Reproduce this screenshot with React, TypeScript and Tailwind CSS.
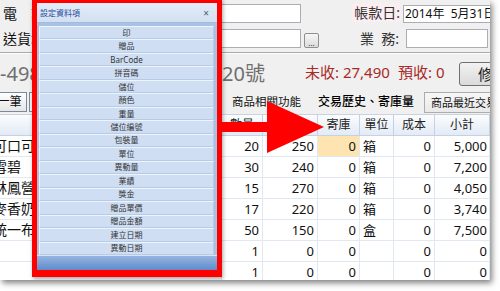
import React from "react";

const font = "font-['Noto_Sans','Noto_Sans_CJK_TC',sans-serif]";

const fields = [
  "印",
  "贈品",
  "BarCode",
  "拼音碼",
  "儲位",
  "顏色",
  "重量",
  "儲位編號",
  "包裝量",
  "單位",
  "異動量",
  "業績",
  "獎金",
  "贈品單價",
  "贈品金額",
  "建立日期",
  "異動日期",
];

const rows = [
  { name: "可口可樂", qty: "20", price: "250", stock: "0", unit: "箱", cost: "0", sum: "5,000" },
  { name: "雪碧", qty: "30", price: "240", stock: "0", unit: "箱", cost: "0", sum: "7,200" },
  { name: "林鳳營鮮乳", qty: "15", price: "270", stock: "0", unit: "箱", cost: "0", sum: "4,050" },
  { name: "麥香奶茶", qty: "17", price: "220", stock: "0", unit: "箱", cost: "0", sum: "3,740" },
  { name: "統一布丁", qty: "50", price: "150", stock: "0", unit: "盒", cost: "0", sum: "7,500" },
  { name: "", qty: "1", price: "0", stock: "0", unit: "", cost: "0", sum: "0" },
  { name: "", qty: "1", price: "0", stock: "0", unit: "", cost: "0", sum: "0" },
];

const cols = "grid grid-cols-[222px_41px_55px_42px_34px_41px_55px]";

function TopForm() {
  return (
    <div className="h-[53px] pt-[4px] flex flex-col gap-[6px] border-b border-[#a9a9a9]">
      {/* 電話 / 帳款日 */}
      <div className="flex items-center h-[19px]">
        <span className="w-[40px] shrink-0 pl-[3px] text-[14px] leading-none whitespace-nowrap overflow-hidden">電　話:</span>
        <div className="w-[261px] shrink-0 h-[19px] bg-white border border-[#abadb3]" />
        <div className="ml-[51px] -mt-[2px] w-[48px] shrink-0 h-[19px] bg-[#fcedf0] flex items-center justify-end text-[14px] text-[#333] leading-none">
          帳款日:
        </div>
        <div className="ml-[3px] mt-[1px] w-[90px] shrink-0 h-[18px] bg-white border border-[#abadb3] flex items-center pl-[1px] text-[12px] leading-none whitespace-nowrap overflow-hidden">
          2014年&nbsp;&nbsp;5月31日
        </div>
      </div>
      {/* 送貨 / 業務 */}
      <div className="flex items-center h-[19px]">
        <span className="w-[40px] shrink-0 pl-[3px] text-[14px] leading-none whitespace-nowrap overflow-hidden">送貨地址:</span>
        <div className="w-[261px] shrink-0 h-[19px] bg-white border border-[#abadb3]" />
        <div className="ml-[3px] mt-[3px] w-[15px] shrink-0 h-[15px] border border-[#8e8f8f] rounded-[2px] bg-gradient-to-b from-[#f6f6f6] to-[#dcdcdc] flex items-end justify-center text-[8px] leading-[9px] text-[#333]">
          ...
        </div>
        <div className="ml-[34px] w-[46px] shrink-0 flex justify-end text-[14px] text-[#333] leading-none whitespace-nowrap">
          業&nbsp;&nbsp;務:
        </div>
        <div className="ml-[7px] w-[82px] shrink-0 h-[19px] bg-white border border-[#abadb3]" />
        <div className="ml-[2px] w-[10px] shrink-0 h-[19px] bg-[#f4f4f4] border border-[#8e8f8f] rounded-[2px]" />
      </div>
    </div>
  );
}

function SummaryRow() {
  return (
    <div className="h-[37px] border-t border-white flex items-center whitespace-nowrap">
      <div className="w-[222px] shrink-0 text-[20px] text-[#6f6f6f] leading-none pt-[3px]">-4987</div>
      <div className="w-[83px] shrink-0 text-[20px] text-[#6f6f6f] leading-none pt-[3px]">20號</div>
      <div className="w-[93px] shrink-0 text-[15px] text-[#a82a27] leading-none">未收: 27,490</div>
      <div className="w-[61px] shrink-0 text-[15px] text-[#a82a27] leading-none">預收: 0</div>
      <div className="mt-[4px] w-[68px] h-[24px] shrink-0 border border-[#707070] rounded-[3px] bg-gradient-to-b from-[#f2f2f2] to-[#dadada] flex items-center justify-center text-[15px] text-[#222]">
        修改
      </div>
    </div>
  );
}

function TabRow() {
  return (
    <div className="h-[25px] flex items-center whitespace-nowrap border-b border-[#c9d3e0]">
      <div className="-ml-[20px] w-[47px] shrink-0 h-[20px] border border-[#7a8a9e] bg-gradient-to-b from-[#ffffff] to-[#e6e6e6] flex items-center justify-center text-[12px] leading-none">
        下一筆
      </div>
      <div className="ml-[2px] w-[40px] shrink-0 h-[20px] border border-[#7a8a9e] bg-[#f4f4f4]" />
      <div className="ml-[163px] shrink-0 text-[11.5px] leading-none text-[#111]">商品相關功能</div>
      <div className="ml-[17px] shrink-0 text-[12px] leading-none text-[#000] font-medium">交易歷史、寄庫量</div>
      <div className="ml-[10px] shrink-0 h-[21px] border border-[#acacac] bg-gradient-to-b from-[#f7f7f7] to-[#e9e9e9] flex items-center pl-[6px] pr-[4px] text-[11px] leading-none text-[#111]">
        商品最近交易
      </div>
    </div>
  );
}

function Grid() {
  const head = "h-[21px] flex items-center justify-center border-r border-b border-[#c5d2e3] text-[12px] text-[#222] leading-none";
  const cell = "h-[21px] flex items-center border-r border-b border-[#e1e8f1] text-[13px] leading-none";
  return (
    <div className="bg-white h-[200px] overflow-hidden">
      <div className={`${cols} bg-gradient-to-b from-[#fbfcfe] to-[#e2eaf5]`}>
        <div className={head}>品名</div>
        <div className={head}>數量</div>
        <div className={head}>單價</div>
        <div className={head}>寄庫</div>
        <div className={head}>單位</div>
        <div className={head}>成本</div>
        <div className={head}>小計</div>
      </div>
      {rows.map((r, i) => (
        <div key={i} className={cols}>
          <div className={`${cell} overflow-hidden whitespace-nowrap text-[14px]`}>
            <span className="-ml-[7px]">{r.name}</span>
          </div>
          <div className={`${cell} justify-end pr-[3px]`}>{r.qty}</div>
          <div className={`${cell} justify-end pr-[3px]`}>{r.price}</div>
          <div className={`${cell} justify-end pr-[3px] ${i === 0 ? "bg-[#fde4b0]" : ""}`}>{r.stock}</div>
          <div className={`${cell} pl-[3px] text-[12px]`}>{r.unit}</div>
          <div className={`${cell} justify-end pr-[3px]`}>{r.cost}</div>
          <div className={`${cell} justify-end pr-[2px]`}>{r.sum}</div>
        </div>
      ))}
    </div>
  );
}

function FieldDialog() {
  return (
    <div className="absolute left-[32px] top-[-2px] w-[190px] h-[279px] border-[5px] border-b-[7px] border-[#ff0000] bg-[#a9c2e3] flex flex-col shadow-[1px_2px_4px_rgba(0,0,0,0.35)]">
      <div className="h-[20px] shrink-0 bg-gradient-to-b from-[#e4edf8] to-[#d2e0f2] border-b border-[#a3bbdc] flex items-center justify-between pl-[3px] pr-[8px]">
        <span className="text-[8px] leading-none text-[#2a4a9a]">設定資料項</span>
        <span className="text-[10px] leading-none text-[#4b5d80]">×</span>
      </div>
      <div className="mt-[3px] pl-[2px] pr-[3px] grid grid-rows-[repeat(17,13.47px)] shrink-0">
        {fields.map((f) => (
          <div
            key={f}
            className="bg-[#cfdef3] border-t border-l border-[#eef4fc] border-b border-r border-b-[#b6cbe7] border-r-[#b6cbe7] flex items-center justify-center text-[8px] leading-none text-[#333]"
          >
            {f}
          </div>
        ))}
      </div>
      <div className="flex-1 bg-gradient-to-b from-[#96b5e0] to-[#5e8bcb] border-t border-[#d8e4f4]" />
    </div>
  );
}

function Arrow() {
  return (
    <svg className="absolute left-[222px] top-[100px]" width="103" height="54" viewBox="0 0 103 54">
      <rect x="0" y="22" width="47" height="10" fill="#ff0000" />
      <polygon points="45,1 102,27 45,53" fill="#ff0000" />
    </svg>
  );
}

export default function App() {
  return (
    <div className="w-[500px] h-[291px] bg-white relative overflow-hidden">
      <div className={`w-[490px] h-[280px] bg-[#f0f0f0] relative overflow-hidden shadow-[2px_3px_6px_rgba(0,0,0,0.5)] ${font} text-[#111]`}>
        <TopForm />
        <SummaryRow />
        <TabRow />
        <Grid />
        <FieldDialog />
        <Arrow />
      </div>
    </div>
  );
}
